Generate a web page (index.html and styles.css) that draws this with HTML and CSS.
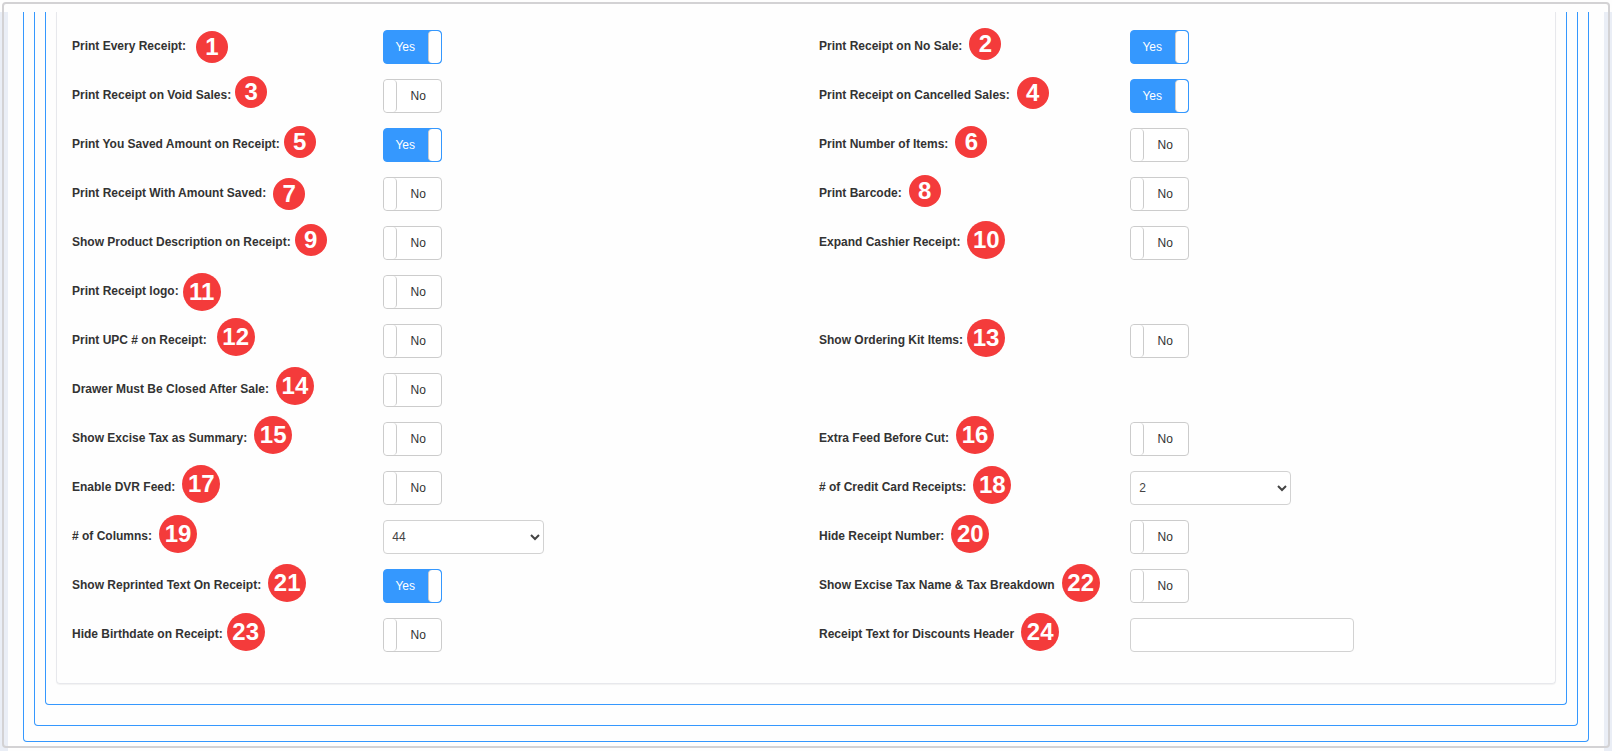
FILE: index.html
```
<!DOCTYPE html>
<html lang="en">
<head>
  <meta charset="UTF-8">
  <meta name="viewport" content="width=device-width, initial-scale=1.0">
  <title>Receipt Settings</title>
  <link rel="stylesheet" href="styles.css">
</head>
<body>
  <div class="frame">
    <div class="page">
      <main class="content">
        <div class="box box-outer">
          <div class="box">
            <div class="box">
              <form class="panel">

                <div class="field">
                  <div class="name"><label for="every">Print Every Receipt:</label><span class="pin far low">1</span></div>
                  <div class="control"><span class="toggle"><input type="checkbox" id="every" checked><span class="text"></span><span class="handle"></span></span></div>
                </div>
                <div class="field">
                  <div class="name"><label for="nosale">Print Receipt on No Sale:</label><span class="pin">2</span></div>
                  <div class="control"><span class="toggle"><input type="checkbox" id="nosale" checked><span class="text"></span><span class="handle"></span></span></div>
                </div>

                <div class="field">
                  <div class="name"><label for="void">Print Receipt on Void Sales:</label><span class="pin near high">3</span></div>
                  <div class="control"><span class="toggle"><input type="checkbox" id="void"><span class="text"></span><span class="handle"></span></span></div>
                </div>
                <div class="field">
                  <div class="name"><label for="cancelled">Print Receipt on Cancelled Sales:</label><span class="pin">4</span></div>
                  <div class="control"><span class="toggle"><input type="checkbox" id="cancelled" checked><span class="text"></span><span class="handle"></span></span></div>
                </div>

                <div class="field">
                  <div class="name"><label for="saved">Print You Saved Amount on Receipt:</label><span class="pin near">5</span></div>
                  <div class="control"><span class="toggle"><input type="checkbox" id="saved" checked><span class="text"></span><span class="handle"></span></span></div>
                </div>
                <div class="field">
                  <div class="name"><label for="items">Print Number of Items:</label><span class="pin">6</span></div>
                  <div class="control"><span class="toggle"><input type="checkbox" id="items"><span class="text"></span><span class="handle"></span></span></div>
                </div>

                <div class="field">
                  <div class="name"><label for="withsaved">Print Receipt With Amount Saved:</label><span class="pin low">7</span></div>
                  <div class="control"><span class="toggle"><input type="checkbox" id="withsaved"><span class="text"></span><span class="handle"></span></span></div>
                </div>
                <div class="field">
                  <div class="name"><label for="barcode">Print Barcode:</label><span class="pin">8</span></div>
                  <div class="control"><span class="toggle"><input type="checkbox" id="barcode"><span class="text"></span><span class="handle"></span></span></div>
                </div>

                <div class="field">
                  <div class="name"><label for="description">Show Product Description on Receipt:</label><span class="pin near">9</span></div>
                  <div class="control"><span class="toggle"><input type="checkbox" id="description"><span class="text"></span><span class="handle"></span></span></div>
                </div>
                <div class="field">
                  <div class="name"><label for="expand">Expand Cashier Receipt:</label><span class="pin wide">10</span></div>
                  <div class="control"><span class="toggle"><input type="checkbox" id="expand"><span class="text"></span><span class="handle"></span></span></div>
                </div>

                <div class="field alone">
                  <div class="name"><label for="logo">Print Receipt logo:</label><span class="pin wide near low">11</span></div>
                  <div class="control"><span class="toggle"><input type="checkbox" id="logo"><span class="text"></span><span class="handle"></span></span></div>
                </div>

                <div class="field">
                  <div class="name"><label for="upc">Print UPC # on Receipt:</label><span class="pin wide far high">12</span></div>
                  <div class="control"><span class="toggle"><input type="checkbox" id="upc"><span class="text"></span><span class="handle"></span></span></div>
                </div>
                <div class="field">
                  <div class="name"><label for="kit">Show Ordering Kit Items:</label><span class="pin wide near">13</span></div>
                  <div class="control"><span class="toggle"><input type="checkbox" id="kit"><span class="text"></span><span class="handle"></span></span></div>
                </div>

                <div class="field alone">
                  <div class="name"><label for="drawer">Drawer Must Be Closed After Sale:</label><span class="pin wide high">14</span></div>
                  <div class="control"><span class="toggle"><input type="checkbox" id="drawer"><span class="text"></span><span class="handle"></span></span></div>
                </div>

                <div class="field">
                  <div class="name"><label for="excise">Show Excise Tax as Summary:</label><span class="pin wide high">15</span></div>
                  <div class="control"><span class="toggle"><input type="checkbox" id="excise"><span class="text"></span><span class="handle"></span></span></div>
                </div>
                <div class="field">
                  <div class="name"><label for="extrafeed">Extra Feed Before Cut:</label><span class="pin wide high">16</span></div>
                  <div class="control"><span class="toggle"><input type="checkbox" id="extrafeed"><span class="text"></span><span class="handle"></span></span></div>
                </div>

                <div class="field">
                  <div class="name"><label for="dvr">Enable DVR Feed:</label><span class="pin wide high">17</span></div>
                  <div class="control"><span class="toggle"><input type="checkbox" id="dvr"><span class="text"></span><span class="handle"></span></span></div>
                </div>
                <div class="field">
                  <div class="name"><label for="cards"># of Credit Card Receipts:</label><span class="pin wide">18</span></div>
                  <div class="control">
                    <select id="cards">
                      <option>1</option>
                      <option selected>2</option>
                    </select>
                  </div>
                </div>

                <div class="field">
                  <div class="name"><label for="columns"># of Columns:</label><span class="pin wide">19</span></div>
                  <div class="control">
                    <select id="columns">
                      <option>40</option>
                      <option selected>44</option>
                    </select>
                  </div>
                </div>
                <div class="field">
                  <div class="name"><label for="hidenumber">Hide Receipt Number:</label><span class="pin wide">20</span></div>
                  <div class="control"><span class="toggle"><input type="checkbox" id="hidenumber"><span class="text"></span><span class="handle"></span></span></div>
                </div>

                <div class="field">
                  <div class="name"><label for="reprinted">Show Reprinted Text On Receipt:</label><span class="pin wide">21</span></div>
                  <div class="control"><span class="toggle"><input type="checkbox" id="reprinted" checked><span class="text"></span><span class="handle"></span></span></div>
                </div>
                <div class="field">
                  <div class="name"><label for="breakdown">Show Excise Tax Name &amp; Tax Breakdown</label><span class="pin wide">22</span></div>
                  <div class="control"><span class="toggle"><input type="checkbox" id="breakdown"><span class="text"></span><span class="handle"></span></span></div>
                </div>

                <div class="field">
                  <div class="name"><label for="birthdate">Hide Birthdate on Receipt:</label><span class="pin wide near">23</span></div>
                  <div class="control"><span class="toggle"><input type="checkbox" id="birthdate"><span class="text"></span><span class="handle"></span></span></div>
                </div>
                <div class="field">
                  <div class="name"><label for="discounts">Receipt Text for Discounts Header</label><span class="pin wide">24</span></div>
                  <div class="control"><input type="text" id="discounts"></div>
                </div>

              </form>
            </div>
          </div>
        </div>
      </main>
    </div>
  </div>
</body>
</html>
```
FILE: styles.css
```
* {
  box-sizing: border-box;
}
body {
  margin: 0;
  background: #fefefe;
  font-family: "Liberation Sans", Arial, sans-serif;
  font-size: 12px;
  color: #333;
}

/* grey outline drawn over the whole page */
.frame {
  position: relative;
  padding-top: 12px;
}
.frame::after {
  content: "";
  position: absolute;
  top: 2px;
  right: 2px;
  bottom: 4px;
  left: 2px;
  border: 2px solid #d3d2d4;
  border-radius: 4px;
  pointer-events: none;
}

.page {
  background: #eaeef6;
  padding: 0 8px;
}
.content {
  background: #fefefe;
  padding: 0 15px 10px;
}

.box {
  border: 1px solid #3598fe;
  border-top: 0;
  border-radius: 0 0 4px 4px;
  padding: 0 10px 20px;
}
.box-outer {
  padding-bottom: 15px;
}

.panel {
  display: grid;
  grid-template-columns: 1fr 1fr;
  row-gap: 15px;
  padding: 18px 4px 31px 0;
  border: 1px solid #e7e8ec;
  border-top: 0;
  border-radius: 0 0 4px 4px;
  box-shadow: 0 1px 1px rgba(0, 0, 0, 0.05);
}

.field {
  display: grid;
  grid-template-columns: 5fr 7fr;
  grid-template-rows: 34px;
}
.alone {
  grid-column: 1 / -1;
  width: 50%;
}
.name {
  display: flex;
  align-items: center;
  padding-left: 15px;
  padding-bottom: 3px;
  font-weight: bold;
  white-space: nowrap;
}
.control {
  padding-left: 15px;
}

/* numbered pins */
.pin {
  display: flex;
  align-items: center;
  justify-content: center;
  flex: none;
  width: 32px;
  height: 32px;
  margin: -3px 0 0 7px;
  border-radius: 50%;
  background: #f43b3b;
  color: #fff;
  font: bold 24px/32px "Liberation Sans", Arial, sans-serif;
}
.wide {
  width: 38px;
  height: 38px;
}
.near {
  margin-left: 4px;
}
.far {
  margin-left: 10px;
}
.high {
  margin-top: -6px;
}
.low {
  margin-top: 2px;
}

/* yes / no switch */
.toggle {
  position: relative;
  display: flex;
  width: 59px;
  height: 34px;
  border: 1px solid #ccc;
  border-radius: 4px;
  background: #fff;
  overflow: hidden;
}
.toggle input {
  position: absolute;
  inset: 0;
  width: 100%;
  height: 100%;
  margin: 0;
  opacity: 0;
  cursor: pointer;
}
.text {
  order: 2;
  flex: 1;
  padding-right: 2px;
  line-height: 32px;
  text-align: center;
}
.text::before {
  content: "No";
}
.handle {
  order: 1;
  width: 13px;
  border-right: 1px solid #ccc;
  border-radius: 4px;
  background: #fff;
}
.toggle:has(input:checked) {
  border-color: #3598fe;
  background: #3598fe;
}
input:checked + .text {
  order: 0;
  color: #fff;
}
input:checked + .text::before {
  content: "Yes";
}
input:checked ~ .handle {
  border-right: 0;
  border-left: 1px solid #ccc;
}

select,
input[type="text"] {
  height: 34px;
  border: 1px solid #d2d2d2;
  border-radius: 4px;
  background: #fff;
  color: #444;
  font: 12px "Liberation Sans", Arial, sans-serif;
}
select {
  width: 161px;
  padding: 6px 4px;
}
input[type="text"] {
  width: 224px;
  padding: 6px 12px;
}
```
